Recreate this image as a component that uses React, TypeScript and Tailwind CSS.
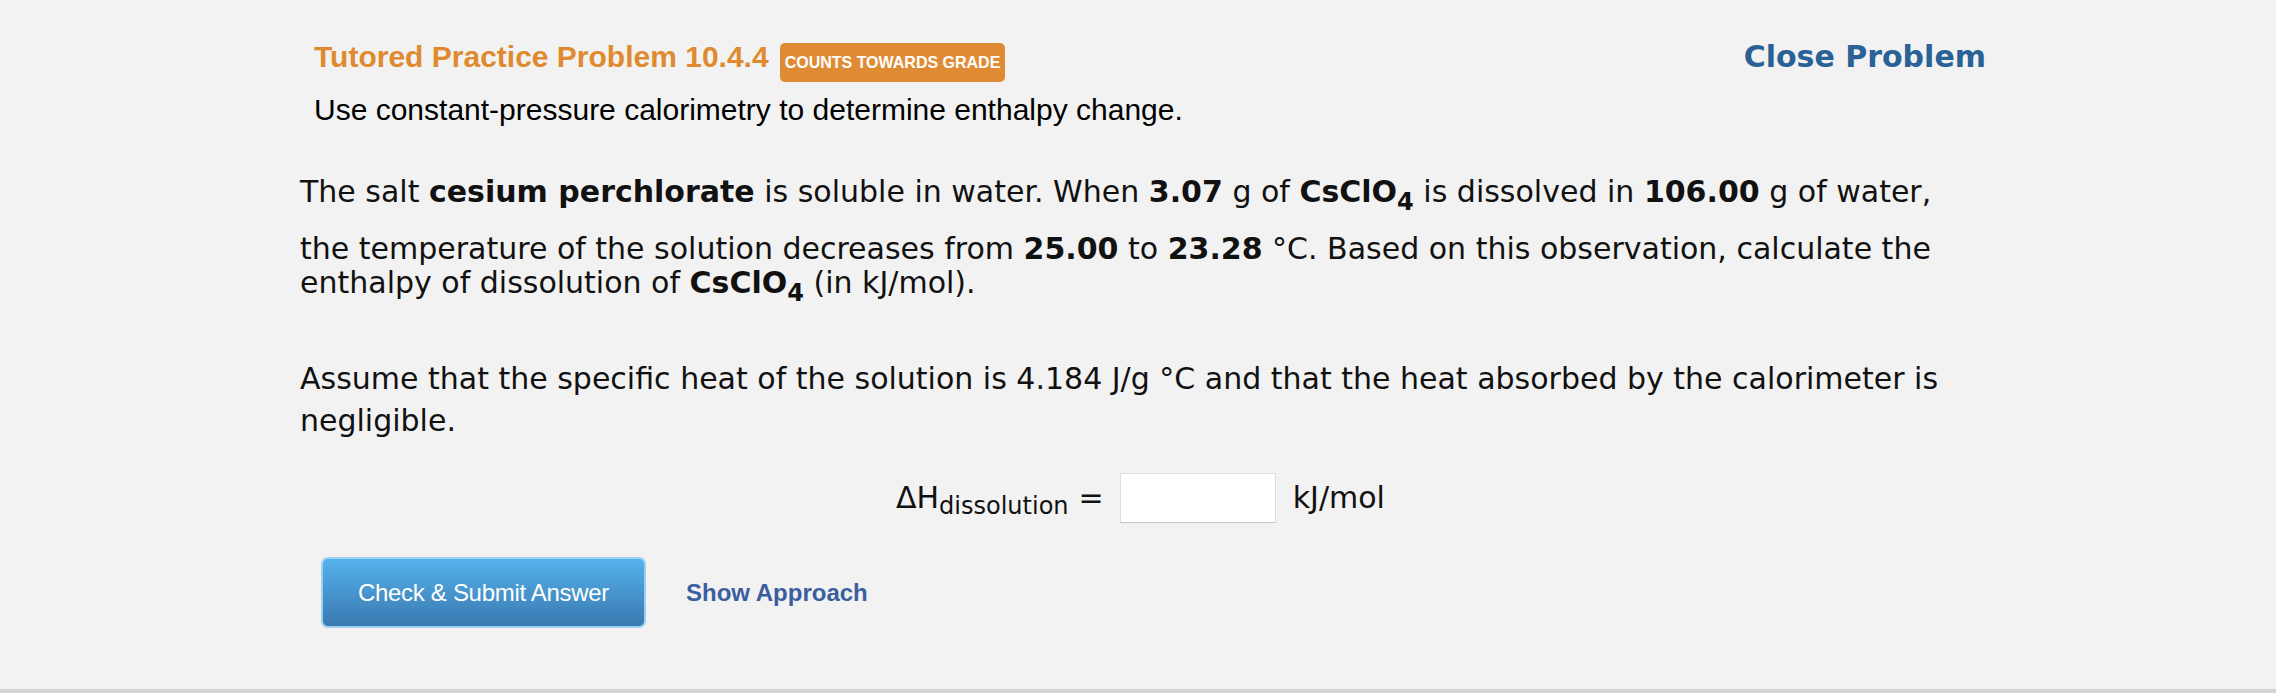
import React from "react";

const Sub = ({ children }: { children: React.ReactNode }) => (
  <span className="relative top-[8px] text-[24px] leading-none">{children}</span>
);

export default function App() {
  const body = "font-['DejaVu_Sans',Verdana,sans-serif] text-[30px] text-[#111] leading-[36px] whitespace-nowrap";
  return (
    <div className="w-full h-[693px] bg-[#f2f2f2] border-b-4 border-[#d4d4d4]">
      <div className="pl-[300px] w-[1986px] pt-[40px]">
        {/* header */}
        <div className="flex items-start justify-between pl-[14px]">
          <div className="flex items-start">
            <span className="font-['Liberation_Sans',Arial,sans-serif] font-bold text-[30px] leading-[34px] text-[#e08a2f] whitespace-nowrap">
              Tutored Practice Problem 10.4.4
            </span>
            <span className="ml-[11px] mt-[3px] h-[39px] px-[5px] rounded-[5px] bg-[#df8b34] flex items-center font-['Liberation_Sans',Arial,sans-serif] font-bold text-[16px] text-white whitespace-nowrap">
              COUNTS TOWARDS GRADE
            </span>
          </div>
          <span className="font-['DejaVu_Sans',Verdana,sans-serif] font-bold text-[30px] leading-[34px] text-[#2a6196] whitespace-nowrap">
            Close Problem
          </span>
        </div>
        <div className="mt-[11px] pl-[14px] font-['Liberation_Sans',Arial,sans-serif] text-[30px] leading-[34px] text-black whitespace-nowrap">
          Use constant-pressure calorimetry to determine enthalpy change.
        </div>

        {/* problem text */}
        <div className="mt-[47px] flex flex-col">
          <div className={`${body} h-[57px]`}>
            The salt <b>cesium perchlorate</b> is soluble in water. When <b>3.07</b> g of{" "}
            <b>
              CsClO<Sub>4</Sub>
            </b>{" "}
            is dissolved in <b>106.00</b> g of water,
          </div>
          <div className={`${body} h-[34px]`}>
            the temperature of the solution decreases from <b>25.00</b> to <b>23.28</b> °C. Based on this observation,
            calculate the
          </div>
          <div className={`${body} h-[36px]`}>
            enthalpy of dissolution of{" "}
            <b>
              CsClO<Sub>4</Sub>
            </b>{" "}
            (in kJ/mol).
          </div>
        </div>

        <div className="mt-[60px] flex flex-col">
          <div className={`${body} h-[42px]`}>
            Assume that the specific heat of the solution is 4.184 J/g °C and that the heat absorbed by the calorimeter is
          </div>
          <div className={`${body} h-[36px]`}>negligible.</div>
        </div>

        {/* answer row */}
        <div className="mt-[34px] h-[50px] flex items-center pl-[596px]">
          <div className={`${body} flex items-center`}>
            <span>ΔH</span>
            <span className="relative top-[8px] text-[24px] leading-none">dissolution</span>
            <span className="ml-[10px]">=</span>
            <input
              type="text"
              className="ml-[16px] w-[156px] h-[50px] bg-white border border-[#dedede] border-b-[#c4c4c4] outline-none"
            />
            <span className="ml-[17px]">kJ/mol</span>
          </div>
        </div>

        {/* buttons */}
        <div className="mt-[34px] pl-[21px] flex items-center">
          <button className="w-[325px] h-[71px] rounded-[7px] border-2 border-[#9dd0f1] bg-gradient-to-b from-[#55b2eb] to-[#3a79b1] text-white font-['Liberation_Sans',Arial,sans-serif] text-[24px] tracking-[-0.3px]">
            Check &amp; Submit Answer
          </button>
          <span className="ml-[40px] font-['Liberation_Sans',Arial,sans-serif] font-bold text-[24px] text-[#3b5e9e] whitespace-nowrap">
            Show Approach
          </span>
        </div>
      </div>
    </div>
  );
}
